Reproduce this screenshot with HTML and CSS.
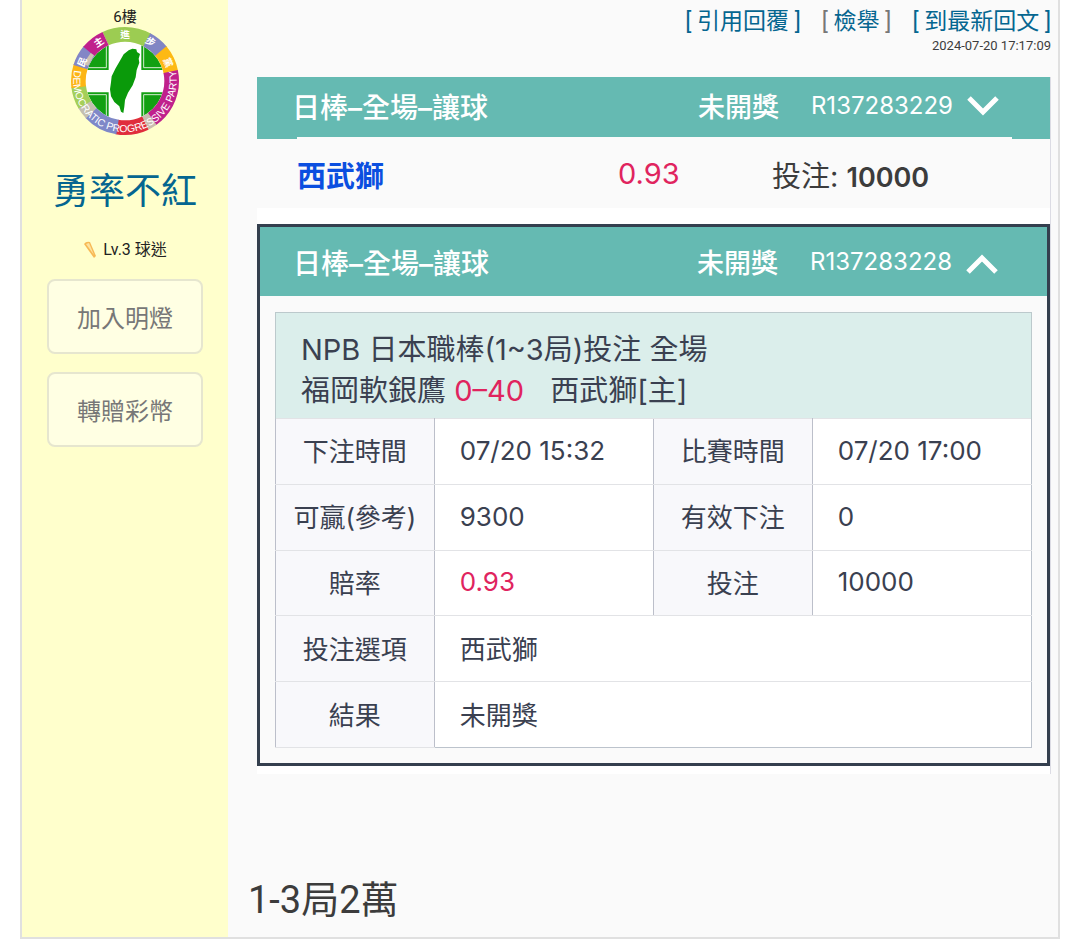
FILE: index.html
```html
<!DOCTYPE html>
<html lang="zh-Hant">
<head>
  <meta charset="utf-8">
  <meta name="viewport" content="width=device-width, initial-scale=1">
  <title>勇率不紅</title>
  <link rel="stylesheet" href="styles.css">
</head>
<body>
  <article class="post">
    <aside class="author">
      <div class="floor">6樓</div>
      <svg class="avatar" viewBox="33 82 324 324" aria-hidden="true">
        <defs>
          <clipPath id="inner"><circle cx="195" cy="244" r="118"/></clipPath>
          <path id="bottomArc" d="M42 218 A155 155 0 1 0 348 218"/>
        </defs>
        <circle cx="195" cy="244" r="119" fill="#fff"/>
        <g clip-path="url(#inner)">
          <path d="M70 110H146V211H70zM244 110H330V211H244zM70 278H146V380H70zM244 278H330V380H244z" fill="#12a012"/>
          <path d="M139 110V204H70M251 110V204H330M139 380V285H70M251 380V285H330" fill="none" stroke="#d5ecd0" stroke-width="3"/>
        </g>
        <path d="M217 147l12 2 2 8 9 6-4 14 2 12-8 22-3 22-9 24-14 22-9 22-2 20-3 19-7-4-5-16-15-13-10-17-3-21 3-21 2-18 11-23 13-22 12-21 15-12z" fill="#0a9a0a"/>
        <!-- ring -->
        <g class="ring" transform="rotate(-90 195 244)">
          <circle cx="195" cy="244" r="140" pathLength="360" stroke="#9ccc52" stroke-dasharray="54 306" stroke-dashoffset="25"/>
          <circle cx="195" cy="244" r="140" pathLength="360" stroke="#8185c4" stroke-dasharray="23 337" stroke-dashoffset="-28"/>
          <circle cx="195" cy="244" r="140" pathLength="360" stroke="#fdb913" stroke-dasharray="29 331" stroke-dashoffset="-50"/>
          <circle cx="195" cy="244" r="140" pathLength="360" stroke="#c0218c" stroke-dasharray="67 293" stroke-dashoffset="-78"/>
          <circle cx="195" cy="244" r="140" pathLength="360" stroke="#c9bdb0" stroke-dasharray="11 349" stroke-dashoffset="-144"/>
          <circle cx="195" cy="244" r="140" pathLength="360" stroke="#e02d3c" stroke-dasharray="36 324" stroke-dashoffset="-154"/>
          <circle cx="195" cy="244" r="140" pathLength="360" stroke="#7f88c8" stroke-dasharray="38 322" stroke-dashoffset="-189"/>
          <circle cx="195" cy="244" r="140" pathLength="360" stroke="#c4bfb0" stroke-dasharray="14 346" stroke-dashoffset="-226"/>
          <circle cx="195" cy="244" r="140" pathLength="360" stroke="#a5cf5a" stroke-dasharray="24 336" stroke-dashoffset="-239"/>
          <circle cx="195" cy="244" r="140" pathLength="360" stroke="#fdb515" stroke-dasharray="26 334" stroke-dashoffset="-262"/>
          <circle cx="195" cy="244" r="140" pathLength="360" stroke="#8386c6" stroke-dasharray="23 337" stroke-dashoffset="-287"/>
          <circle cx="195" cy="244" r="140" pathLength="360" stroke="#c0218c" stroke-dasharray="26 334" stroke-dashoffset="-309"/>
        </g>
        <path d="M70 192l22-32 10 7-18 32z" fill="#cfc3b2"/>
        <g class="ring-zh">
          <text x="195" y="114" transform="rotate(-66 195 244)">民</text>
          <text x="195" y="114" transform="rotate(-34 195 244)">主</text>
          <text x="195" y="114">進</text>
          <text x="195" y="114" transform="rotate(33 195 244)">步</text>
          <text x="195" y="114" transform="rotate(67 195 244)">黨</text>
        </g>
        <text class="ring-en"><textPath href="#bottomArc" startOffset="50%">DEMOCRATIC PROGRESSIVE PARTY</textPath></text>
      </svg>
      <a class="name" href="#">勇率不紅</a>
      <div class="level">
        <svg class="bat" viewBox="0 0 14 18" aria-hidden="true">
          <path d="M1 3Q3 0 7 1L13 15 11 17Z" fill="#f7b955"/>
          <path d="M3 3L6 2 11 14Z" fill="#fde3a0"/>
        </svg>
        <span>Lv.3 球迷</span>
      </div>
      <button class="side-btn" type="button">加入明燈</button>
      <button class="side-btn" type="button">轉贈彩幣</button>
    </aside>

    <section class="main">
      <nav class="actions">
        <a href="#">[ 引用回覆 ]</a>
        <span class="report">[ <a href="#">檢舉</a> ]</span>
        <a href="#">[ 到最新回文 ]</a>
      </nav>
      <time class="date" datetime="2024-07-20T17:17:09">2024-07-20 17:17:09</time>

      <div class="slip">
        <div class="bet-head">
          <span class="bet-title">日棒–全場–讓球</span>
          <span class="bet-status">未開獎</span>
          <span class="bet-no">R137283229</span>
          <svg class="chevron" viewBox="0 0 34 22" aria-hidden="true"><path d="M3 3L17 17 31 3"/></svg>
        </div>
        <div class="bet-row">
          <span class="pick">西武獅</span>
          <span class="odds">0.93</span>
          <span class="stake">投注: <b>10000</b></span>
        </div>

        <div class="bet-open">
          <div class="bet-head">
            <span class="bet-title">日棒–全場–讓球</span>
            <span class="bet-status">未開獎</span>
            <span class="bet-no">R137283228</span>
            <svg class="chevron" viewBox="0 0 34 22" aria-hidden="true"><path d="M3 19L17 5 31 19"/></svg>
          </div>
          <table class="detail">
            <colgroup>
              <col class="col-label"><col class="col-value"><col class="col-label"><col class="col-value">
            </colgroup>
            <thead>
              <tr>
                <th colspan="4">NPB 日本職棒(1~3局)投注 全場<br>福岡軟銀鷹 <span class="red">0–40</span> <span class="home">西武獅[主]</span></th>
              </tr>
            </thead>
            <tbody>
              <tr><th>下注時間</th><td>07/20 15:32</td><th>比賽時間</th><td>07/20 17:00</td></tr>
              <tr><th>可贏(參考)</th><td>9300</td><th>有效下注</th><td>0</td></tr>
              <tr><th>賠率</th><td class="red">0.93</td><th>投注</th><td>10000</td></tr>
              <tr><th>投注選項</th><td colspan="3">西武獅</td></tr>
              <tr><th>結果</th><td colspan="3">未開獎</td></tr>
            </tbody>
          </table>
        </div>
      </div>

      <p class="message">1-3局2萬</p>
    </section>
  </article>
</body>
</html>
```
FILE: styles.css
```css
* {
  box-sizing: border-box;
}
body {
  margin: 0;
  padding: 0 20px;
  background: #fff;
  font-family: Roboto, "Noto Sans CJK TC", sans-serif;
  color: #3c3c3c;
}
a {
  color: #056690;
  text-decoration: none;
}
.post {
  display: flex;
  border: 2px solid #e0e0e0;
  border-top: none;
  background: #fafafa;
}

/* left column */
.author {
  flex: 0 0 206px;
  display: flex;
  flex-direction: column;
  align-items: center;
  padding-top: 7px;
  background: #ffffcc;
}
.floor {
  font-size: 15px;
  line-height: 20px;
  color: #222;
}
.avatar {
  width: 108px;
  height: 108px;
}
.ring circle {
  fill: none;
  stroke-width: 44;
}
.ring-zh {
  font: bold 29px "Noto Sans CJK TC", sans-serif;
  fill: #fff;
  text-anchor: middle;
}
.ring-en {
  font: 31px "Liberation Sans Narrow", "Liberation Sans", sans-serif;
  fill: #fff;
  text-anchor: middle;
}
.name {
  margin-top: 32px;
  font-size: 36px;
  line-height: 50px;
}
.level {
  display: flex;
  align-items: center;
  gap: 6px;
  margin: 23px 0 19px;
  font-size: 16px;
  line-height: 20px;
  color: #222;
}
.bat {
  width: 14px;
  height: 18px;
}
.side-btn {
  width: 156px;
  height: 75px;
  margin-bottom: 18px;
  border: 2px solid #e6e6cf;
  border-radius: 8px;
  background: #ffffe3;
  color: #777;
  font-family: inherit;
  font-size: 24px;
}

/* right column */
.main {
  flex: 1;
  min-width: 0;
  padding: 7px 7px 12px 20px;
}
.actions {
  display: flex;
  justify-content: flex-end;
  gap: 21px;
  font-size: 23px;
  line-height: 30px;
}
.report {
  color: #777;
}
.date {
  display: block;
  font-size: 13px;
  line-height: 18px;
  text-align: right;
}
.slip {
  margin: 22px 0 0 9px;
  padding-bottom: 8px;
  border-right: 1px solid #dcdce4;
  background: #fff;
  font-family: Inter, "Noto Sans CJK TC", sans-serif;
}
.bet-head {
  display: flex;
  align-items: center;
  height: 62px;
  padding: 0 50px 5px 35px;
  background: #65bab2;
  color: #fff;
}
.bet-title {
  flex: 1;
  font-size: 28px;
  font-weight: 500;
}
.bet-status {
  font-size: 27px;
  font-weight: 500;
}
.bet-no {
  margin: 0 13px 0 32px;
  font-size: 24px;
}
.chevron {
  width: 34px;
  height: 22px;
  fill: none;
  stroke: #fff;
  stroke-width: 5;
}
.bet-row {
  position: relative;
  display: grid;
  grid-template-columns: 321px 154px 1fr;
  align-items: center;
  height: 69px;
  padding-left: 40px;
  background: #fafafa;
  font-size: 29px;
}
/* light edge that runs into the header above */
.bet-row::before {
  content: "";
  position: absolute;
  top: -2px;
  left: 40px;
  right: 38px;
  height: 2px;
  background: #fafafa;
}
.pick {
  color: #0b4fe0;
  font-weight: bold;
}
.odds,
.red {
  color: #e0245e;
}
.stake b {
  font-size: 27px;
  font-weight: 600;
}
.bet-open {
  margin-top: 16px;
  padding-bottom: 15px;
  border: 3px solid #343f4e;
  background: #fafafa;
}
.bet-open .bet-head {
  height: 69px;
  margin-bottom: 16px;
  padding: 0 48px 0 33px;
}
.bet-open .chevron {
  margin-top: 4px;
}
.detail {
  width: calc(100% - 30px);
  height: 436px;
  margin: 0 15px;
  border-collapse: collapse;
  table-layout: fixed;
  border: 1px solid #bcc3cc;
  background: #fff;
  color: #3a4050;
  font-size: 26px;
}
.col-label {
  width: 21%;
}
.col-value {
  width: 29%;
}
.detail th {
  height: 65px;
  padding: 0 0 3px;
  border: 1px solid #bcbfca;
  border-top-color: #e2e3e6;
  border-bottom-color: #e2e3e6;
  background: #f8f8fb;
  font-weight: normal;
}
.detail td {
  padding: 0 0 2px 25px;
  border-top: 1px solid #e2e3e6;
}
.detail thead th {
  height: 106px;
  padding: 8px 25px 0;
  border-color: #bcc9cc;
  border-bottom: none;
  background: #dbeeeb;
  font-size: 29px;
  line-height: 41px;
  text-align: left;
}
.detail td.red {
  color: #e0245e;
}
.home {
  margin-left: 18px;
}
.message {
  margin: 101px 0 0;
  font-size: 38px;
  line-height: 50px;
}
```
